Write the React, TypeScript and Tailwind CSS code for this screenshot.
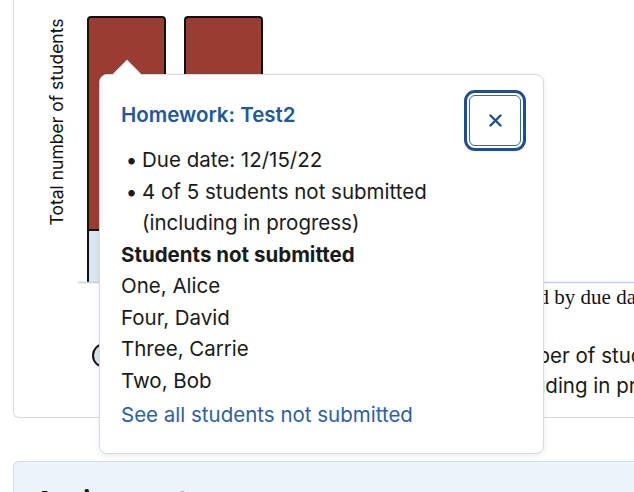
import React from "react";

const names = ["One, Alice", "Four, David", "Three, Carrie", "Two, Bob"];

const Chart = () => (
  <svg width={620} height={320} viewBox="14 0 620 320" className="block">
    {/* y axis label */}
    <text
      x={0}
      y={0}
      transform="translate(63 122) rotate(-90)"
      textAnchor="middle"
      fontSize={17.5}
      fill="#111"
      style={{ fontFamily: 'Inter, sans-serif' }}
    >
      Total number of students
    </text>

    {/* bar 1 */}
    <rect x={88} y={230} width={77} height={52} fill="#dbe6f1" />
    <path d="M88,230 V20 Q88,17 91,17 H162 Q165,17 165,20 V230 Z" fill="#9b3c32" />
    <path
      d="M88,282 V20 Q88,17 91,17 H162 Q165,17 165,20 V282 M88,230 H165"
      fill="none"
      stroke="#111"
      strokeWidth={2}
    />

    {/* bar 2 */}
    <rect x={185} y={240} width={77} height={42} fill="#dbe6f1" />
    <path d="M185,240 V20 Q185,17 188,17 H259 Q262,17 262,20 V240 Z" fill="#9b3c32" />
    <path
      d="M185,282 V20 Q185,17 188,17 H259 Q262,17 262,20 V282 M185,240 H262"
      fill="none"
      stroke="#111"
      strokeWidth={2}
    />

    {/* baseline */}
    <line x1={78} y1={282.5} x2={640} y2={282.5} stroke="#c3d2e6" strokeWidth={1.5} />

    {/* x axis title */}
    <text
      x={384}
      y={304}
      fontSize={21}
      fill="#111"
      style={{ fontFamily: '"Liberation Serif", serif' }}
    >
      Assignments sorted by due date
    </text>
  </svg>
);

const LegendItem = ({ color, label, width }: { color: string; label: React.ReactNode; width: string }) => (
  <div className={`flex shrink-0 items-start gap-[10px] ${width}`}>
    <span
      className="mt-[2px] h-[25px] w-[25px] shrink-0 rounded-full border-2 border-[#111]"
      style={{ backgroundColor: color }}
    />
    <span className="whitespace-nowrap text-[20.5px] leading-[30px] text-[#1a1a1a]">{label}</span>
  </div>
);

const Popover = () => (
  <div className="absolute left-[99px] top-[74px] w-[445px] h-[380px] rounded-lg border border-[#d3dae3] bg-white pl-[21px] pr-[22px] pt-[20px] pb-[22px] shadow-[0_2px_6px_rgba(0,0,0,0.08)]">
    {/* arrow */}
    <div className="absolute left-[17px] -top-[11px] h-[20px] w-[20px] rotate-45 border-l border-t border-[#d3dae3] bg-white" />

    <div className="relative flex items-start justify-between">
      <h3 className="mt-[4px] text-[20.5px] font-semibold leading-[31.5px] text-[#2358a0]">
        Homework: Test2
      </h3>
      <button className="flex h-[51px] w-[52px] items-center justify-center rounded-[6px] border border-[#3565aa] outline-[3px] outline-offset-[2px] outline-solid outline-[#1f4f91]">
        <svg width="13" height="13" viewBox="0 0 13 13">
          <path d="M1.5 1.5 L11.5 11.5 M11.5 1.5 L1.5 11.5" stroke="#1f4f91" strokeWidth="2.4" strokeLinecap="round" />
        </svg>
      </button>
    </div>

    <div className="relative -mt-[2px] text-[20.5px] leading-[31.5px] text-[#1a1a1a]">
      <div className="flex">
        <span className="w-[21px] shrink-0 text-center">•</span>
        <span>Due date: 12/15/22</span>
      </div>
      <div className="flex">
        <span className="w-[21px] shrink-0 text-center">•</span>
        <span>
          4 of 5 students not submitted
          <br />
          (including in progress)
        </span>
      </div>
      <div className="font-bold">Students not submitted</div>
      {names.map((n) => (
        <div key={n}>{n}</div>
      ))}
      <a href="#" className="mt-[3px] block text-[#2d60a8]">
        See all students not submitted
      </a>
    </div>
  </div>
);

export default function App() {
  return (
    <div
      className="relative h-[492px] w-[634px] overflow-hidden bg-white"
      style={{ fontFamily: 'Inter, sans-serif' }}
    >
      <div className="ml-[13px] h-[418px] w-[760px] rounded-bl-[6px] border-b border-l border-[#d5dae1]">
        <Chart />
        <div className="mt-[21px] flex pl-[78px]">
          <LegendItem color="#dbe6f1" label="Number of students submitted" width="w-[365px]" />
          <LegendItem
            color="#9b3c32"
            label={
              <>
                Number of students not submitted
                <br />
                (including in progress)
              </>
            }
            width="w-[360px]"
          />
        </div>
      </div>

      <div className="ml-[13px] mt-[43px] w-[700px] rounded-tl-[6px] border-l border-t border-[#d5dce4] bg-[#edf3fb] px-[21px] pt-[23px]">
        <div className="flex items-start gap-[28px]">
          <h2 className="text-[26px] font-bold leading-[32px] text-[#111]">Assignment overview</h2>
          <span className="text-[18px] leading-[32px] text-[#1a1a1a]">Sorted by assignments on the selected date</span>
        </div>
      </div>

      <Popover />
    </div>
  );
}
